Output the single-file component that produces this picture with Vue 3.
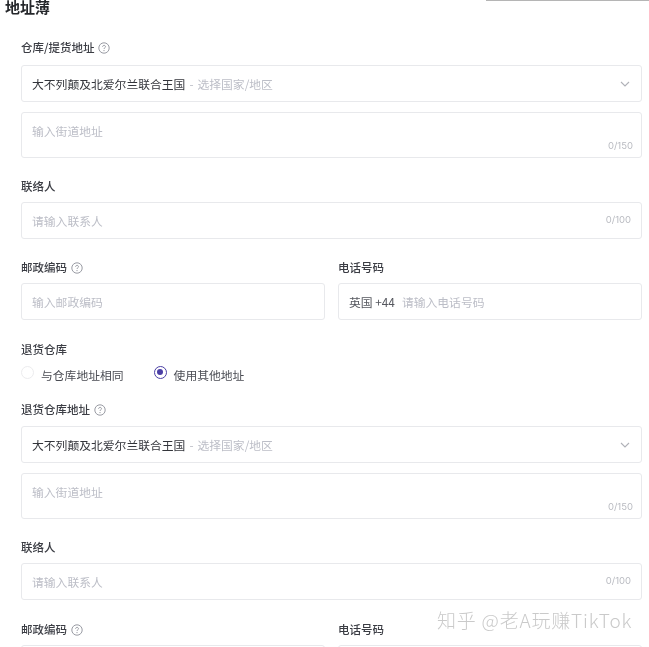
<template>
  <div class="page">
    <div class="top-line"></div>
    <h2 class="title">地址薄</h2>
    <div class="form">
      <div v-for="(section, i) in sections" :key="i" :class="{ second: i === 1 }">
        <div class="label first">{{ section.addressLabel }} <HelpIcon /></div>
        <div class="box select">
          <span class="country">大不列颠及北爱尔兰联合王国</span>
          <span class="dash">-</span>
          <span class="hint">选择国家/地区</span>
          <svg class="chevron" width="10" height="6" viewBox="0 0 10 6">
            <path d="M1 1l4 4 4-4" fill="none" stroke="#b0b2b8" stroke-width="1.1" />
          </svg>
        </div>
        <div class="box area">
          <span class="hint">输入街道地址</span>
          <span class="count area-count">0/150</span>
        </div>
        <div class="label contact-label">联络人</div>
        <div class="box input">
          <span class="hint">请输入联系人</span>
          <span class="count">0/100</span>
        </div>
        <div class="two-col">
          <div>
            <div class="label">邮政编码 <HelpIcon /></div>
            <div class="box input"><span v-if="i === 0" class="hint">输入邮政编码</span></div>
          </div>
          <div>
            <div class="label">电话号码</div>
            <div class="box input">
              <template v-if="i === 0">
                <span class="phone">英国 +44</span>
                <span class="hint">请输入电话号码</span>
              </template>
            </div>
          </div>
        </div>
        <template v-if="i === 0">
          <div class="label return-label">退货仓库</div>
          <div class="radios">
            <label class="radio">
              <span class="dot"></span>
              与仓库地址相同
            </label>
            <label class="radio">
              <span class="dot on"></span>
              使用其他地址
            </label>
          </div>
        </template>
      </div>
    </div>
    <div class="watermark">知乎 @老A玩赚TikTok</div>
  </div>
</template>

<script setup>
import { h } from 'vue';

const HelpIcon = () =>
  h('svg', { class: 'help', width: 12, height: 12, viewBox: '0 0 12 12', style: 'vertical-align:-2px;margin-left:1px' }, [
    h('circle', { cx: 6, cy: 6, r: 5.2, fill: 'none', stroke: '#8d9099', 'stroke-width': 0.9 }),
    h('path', { d: 'M4.6 4.8c0-1.9 2.9-1.9 2.9-.1 0 1.1-1.5 1.1-1.5 2.3', fill: 'none', stroke: '#8d9099', 'stroke-width': 0.9 }),
    h('circle', { cx: 6, cy: 8.6, r: 0.6, fill: '#8d9099' })
  ]);

const sections = [
  { addressLabel: '仓库/提货地址' },
  { addressLabel: '退货仓库地址' }
];
</script>

<style scoped>
.page {
  position: relative;
  width: 649px;
  height: 647px;
  overflow: hidden;
  background: #fff;
  font-family: "Noto Sans CJK SC", "Liberation Sans", sans-serif;
  font-size: 11.8px;
  color: #33353b;
  filter: blur(0.35px);
}
.top-line {
  position: absolute;
  top: 0;
  left: 486px;
  right: 0;
  height: 1px;
  background: #b5b5b5;
}
.title {
  margin: 0;
  padding-left: 5px;
  height: 15px;
  font-size: 15px;
  line-height: 14px;
  font-weight: 700;
  color: #25272b;
}
.form {
  padding: 24px 7px 0 21px;
}
.label {
  height: 16px;
  line-height: 16px;
  font-size: 11.5px;
  font-weight: 500;
  color: #3b3d44;
}
.first {
  margin-bottom: 10px;
}
.second .first {
  margin-bottom: 9px;
}
.box {
  position: relative;
  box-sizing: border-box;
  display: flex;
  align-items: center;
  border: 1px solid #e8e9ec;
  border-radius: 3px;
  padding: 0 10px;
}
.select {
  height: 37px;
  gap: 4px;
}
.country {
  color: #33353b;
}
.dash,
.hint {
  color: #bcbec7;
}
.chevron {
  position: absolute;
  right: 11px;
  top: 15px;
}
.area {
  height: 46px;
  margin-top: 10px;
  align-items: flex-start;
  padding-top: 9px;
}
.input {
  height: 37px;
  margin-top: 8px;
}
.count {
  position: absolute;
  right: 10px;
  top: 11px;
  font-family: "Inter", "Liberation Sans", sans-serif;
  font-size: 9.5px;
  color: #b9bbc1;
}
.area-count {
  top: auto;
  bottom: 6px;
  right: 8px;
}
.contact-label {
  margin-top: 20px;
}
.two-col {
  display: grid;
  grid-template-columns: 304px 304px;
  gap: 13px;
  margin-top: 20px;
}
.second .two-col {
  margin-top: 21px;
}
.phone {
  color: #55575e;
  margin-right: 7px;
}
.return-label {
  margin-top: 21px;
}
.radios {
  display: flex;
  gap: 30px;
  height: 20px;
  margin-top: 7px;
  margin-bottom: 17px;
  align-items: center;
}
.radio {
  display: flex;
  align-items: center;
  gap: 7px;
  color: #4a4c53;
}
.dot {
  position: relative;
  top: -2px;
  box-sizing: border-box;
  width: 13px;
  height: 13px;
  border: 1px solid #ececee;
  border-radius: 50%;
}
.dot.on {
  border-color: #4b3fa5;
}
.dot.on::after {
  content: "";
  position: absolute;
  top: 2.5px;
  left: 2.5px;
  width: 6px;
  height: 6px;
  border-radius: 50%;
  background: #4b3fa5;
}
.watermark {
  position: absolute;
  left: 437px;
  top: 608px;
  font-size: 19px;
  font-weight: 300;
  line-height: 23px;
  letter-spacing: 0.8px;
  color: #cacaca;
  white-space: nowrap;
}
</style>
